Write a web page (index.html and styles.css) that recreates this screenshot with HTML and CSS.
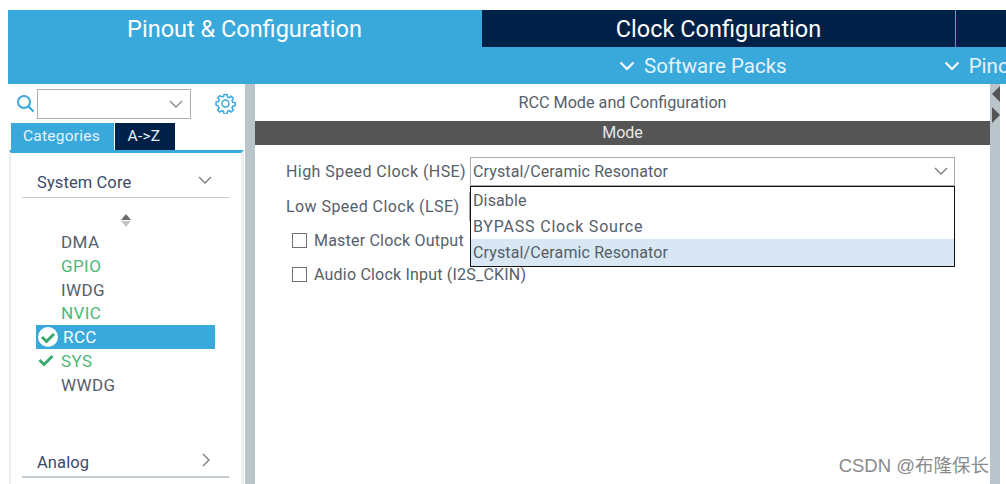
FILE: index.html

```html
<!DOCTYPE html>
<html lang="en">
<head>
  <meta charset="UTF-8">
  <title>RCC Mode and Configuration</title>
  <link rel="stylesheet" href="styles.css">
</head>
<body>
  <header class="top">
    <div class="tabs">
      <div class="tab tab-active">Pinout &amp; Configuration</div>
      <div class="tab">Clock Configuration</div>
      <div class="tab tab-rest"></div>
    </div>
    <div class="subbar">
      <div class="sub sub-packs">
        <svg class="sub-chevron" width="16" height="10" viewBox="0 0 16 10"><path d="M1.500 1.500L8 8l6.500-6.500" fill="none" stroke="#fff" stroke-width="2.200"/></svg>
        Software Packs
      </div>
      <div class="sub sub-pinout">
        <svg class="sub-chevron" width="16" height="10" viewBox="0 0 16 10"><path d="M1.500 1.500L8 8l6.500-6.500" fill="none" stroke="#fff" stroke-width="2.200"/></svg>
        Pinout
      </div>
    </div>
  </header>

  <div class="body-row">
    <aside class="side">
      <div class="search-row">
        <svg class="search-icon" width="19" height="19" viewBox="0 0 19 19"><circle cx="8" cy="8" r="6" fill="none" stroke="#39a9dc" stroke-width="2"/><path d="M12.500 12.500L17.500 17.500" stroke="#39a9dc" stroke-width="2.200"/></svg>
        <div class="search-box">
          <svg width="14" height="8" viewBox="0 0 14 8"><path d="M1 1l6 6 6-6" fill="none" stroke="#8a8a8a" stroke-width="1.400"/></svg>
        </div>
        <svg class="gear" width="21" height="21" viewBox="0 0 21 21"><path d="M9 1.500h3l.5 2.500 1.700.7 2.100-1.400 2.100 2.100-1.400 2.100.7 1.700 2.500.5v3l-2.500.5-.7 1.700 1.400 2.100-2.100 2.100-2.100-1.400-1.700.7-.5 2.500H9l-.5-2.500-1.700-.7-2.100 1.400-2.100-2.100 1.400-2.100-.7-1.700L1 12V9l2.500-.5.7-1.700-1.400-2.100 2.100-2.100 2.100 1.400 1.700-.7z" fill="none" stroke="#39a9dc" stroke-width="1.500"/><circle cx="10.500" cy="10.500" r="3.500" fill="none" stroke="#39a9dc" stroke-width="1.500"/></svg>
      </div>
      <div class="cat-tabs">
        <div class="cat-tab cat-on">Categories</div>
        <div class="cat-tab cat-off">A-&gt;Z</div>
      </div>
      <div class="cat-panel">
        <div class="group">
          <span>System Core</span>
          <svg class="chev-down" width="14" height="8" viewBox="0 0 14 8"><path d="M1 1l6 6 6-6" fill="none" stroke="#7b7b7b" stroke-width="1.400"/></svg>
        </div>
        <div class="sort"><span class="sort-up"></span><span class="sort-down"></span></div>
        <ul class="items">
          <li>DMA</li>
          <li class="ok">GPIO</li>
          <li>IWDG</li>
          <li class="ok">NVIC</li>
          <li class="picked">
            <svg class="mark" width="22" height="22" viewBox="0 0 22 22"><circle cx="11" cy="11" r="10" fill="#fff"/><path d="M5 11l4.500 4.500L17 8" fill="none" stroke="#3aa76d" stroke-width="3"/></svg>
            RCC
          </li>
          <li class="ok">
            <svg class="mark" width="16" height="13" viewBox="0 0 16 13"><path d="M1.500 6l4.500 4.500L14.500 2" fill="none" stroke="#3aa76d" stroke-width="3"/></svg>
            SYS
          </li>
          <li>WWDG</li>
        </ul>
        <div class="group group-last">
          <span>Analog</span>
          <svg class="chev-right" width="8" height="14" viewBox="0 0 8 14"><path d="M1 1l6 6-6 6" fill="none" stroke="#7b7b7b" stroke-width="1.400"/></svg>
        </div>
      </div>
    </aside>

    <div class="bar"></div>

    <main class="main">
      <div class="main-title">RCC Mode and Configuration</div>
      <div class="mode-head">Mode</div>
      <div class="form">
        <div class="row row-hse">
          <label class="label-wide">High Speed Clock (HSE)</label>
          <div class="select">
            <span>Crystal/Ceramic Resonator</span>
            <svg width="14" height="8" viewBox="0 0 14 8"><path d="M1 1l6 6 6-6" fill="none" stroke="#7b7b7b" stroke-width="1.300"/></svg>
          </div>
        </div>
        <div class="row row-lse">
          <label class="label-wide">Low Speed Clock (LSE)</label>
          <div class="select select-lse"></div>
        </div>
        <div class="row row-check"><span class="box"></span><label>Master Clock Output</label></div>
        <div class="row row-check"><span class="box"></span><label>Audio Clock Input (I2S_CKIN)</label></div>
        <ul class="menu">
          <li>Disable</li>
          <li class="menu-wide">BYPASS Clock Source</li>
          <li class="menu-on">Crystal/Ceramic Resonator</li>
        </ul>
      </div>
    </main>

    <div class="bar bar-right">
      <span class="arrow-left"></span>
      <span class="arrow-right"></span>
    </div>
  </div>

  <div class="watermark">CSDN @布隆保长</div>
</body>
</html>
```

FILE: styles.css

```css
html, body {
  margin: 0;
  height: 484px;
  overflow: hidden;
}
body {
  position: relative;
  background: #fff;
  padding: 10px 0 0 8px;
  box-sizing: border-box;
  font-family: Roboto, "Liberation Sans", sans-serif;
  color: #555e6b;
}
ul {
  list-style: none;
  margin: 0;
  padding: 0;
}
.top {
  background: #39a9dc;
  height: 74px;
}
.tabs {
  display: flex;
  height: 37px;
}
.tab {
  width: 473px;
  margin-right: 1px;
  background: #002147;
  color: #fff;
  font-size: 23.500px;
  line-height: 39px;
  text-align: center;
}
.tab-active {
  background: #39a9dc;
}
.tab-rest {
  flex: 1;
  margin-right: 0;
}
.subbar {
  display: flex;
  height: 37px;
  color: #e4f3fb;
  font-size: 20.500px;
  line-height: 35px;
  overflow: hidden;
}
.sub {
  display: flex;
  align-items: center;
  gap: 9px;
  height: 35px;
  padding-top: 2px;
  white-space: nowrap;
}
.sub-chevron {
  margin-top: -2px;
}
.sub-packs {
  margin-left: 611px;
}
.sub-pinout {
  margin-left: 157px;
}
.body-row {
  display: flex;
  height: 400px;
}
.side {
  width: 237px;
  flex: none;
}
.search-row {
  display: flex;
  align-items: center;
  height: 39px;
  padding-left: 8px;
}
.search-box {
  display: flex;
  align-items: center;
  justify-content: flex-end;
  width: 145px;
  height: 28px;
  margin-left: 2px;
  padding-right: 7px;
  border: 1px solid #a8adb2;
}
.gear {
  margin-left: 24px;
}
.cat-tabs {
  display: flex;
  gap: 1px;
  height: 27px;
  padding-left: 3px;
}
.cat-tab {
  font-size: 15.500px;
  line-height: 27px;
  letter-spacing: 0.25px;
  text-align: center;
  color: #e4f3fb;
}
.cat-on {
  width: 101px;
  padding-right: 2px;
  background: #39a9dc;
}
.cat-off {
  width: 58px;
  padding-right: 2px;
  background: #002147;
}
.cat-panel {
  height: 334px;
  margin: 0 1px;
  padding: 0 12px 0 11px;
  box-sizing: border-box;
  border-top: 3px solid #39a9dc;
  border-left: 2px solid #eceff1;
  border-right: 3px solid #eceff1;
}
.group {
  display: flex;
  justify-content: space-between;
  align-items: flex-end;
  height: 45px;
  padding: 0 17px 5px 15px;
  box-sizing: border-box;
  border-bottom: 1px solid #c3ccd3;
  font-size: 16.500px;
  line-height: 19px;
  letter-spacing: 0.1px;
  color: #3b4a6b;
}
.chev-down {
  margin-bottom: 8px;
}
.group-last {
  height: 34px;
  margin-top: 47px;
  padding-bottom: 4px;
  border-bottom-width: 2px;
}
.chev-right {
  margin: 0 2px 5px 0;
}
.sort {
  display: flex;
  flex-direction: column;
  align-items: center;
  gap: 1px;
  height: 13px;
  margin: 16px 0 0 1px;
}
.sort-up {
  border: 5px solid transparent;
  border-top: 0;
  border-bottom: 6px solid #6c6c6c;
}
.sort-down {
  border: 5px solid transparent;
  border-bottom: 0;
  border-top: 6px solid #c6c6c6;
}
.items {
  width: 179px;
  margin: 3px 0 0 14px;
}
.items li {
  position: relative;
  height: 23.800px;
  padding-left: 25px;
  font-size: 17px;
  line-height: 24px;
  letter-spacing: 0.4px;
}
.items .ok {
  color: #4cb878;
}
.items .picked {
  padding-left: 27px;
  background: #39a9dc;
  color: #fff;
}
.mark {
  position: absolute;
  left: 1px;
  top: 1px;
}
.ok .mark {
  left: 2px;
  top: 5px;
}
.bar {
  width: 10px;
  flex: none;
  background: #b9c4cb;
}
.main {
  width: 735px;
  flex: none;
}
.main-title {
  height: 37px;
  font-size: 16.200px;
  line-height: 38px;
  text-align: center;
}
.mode-head {
  height: 24px;
  background: #545554;
  color: #e8e8e8;
  font-size: 16px;
  line-height: 24px;
  text-align: center;
}
.form {
  position: relative;
  padding: 12px 0 0 31px;
  font-size: 16px;
  letter-spacing: 0.2px;
}
.row {
  display: flex;
  align-items: center;
}
.label-wide {
  width: 184px;
  flex: none;
  letter-spacing: 0.44px;
}
.row-hse {
  height: 28px;
}
.row-lse {
  height: 38px;
  padding-top: 4px;
  box-sizing: border-box;
}
.row-check {
  height: 34px;
  padding-left: 6px;
  gap: 7px;
}
.select {
  display: flex;
  justify-content: space-between;
  align-items: center;
  width: 485px;
  height: 29px;
  padding: 0 6px 0 2px;
  border: 1px solid #a8adb2;
  box-sizing: border-box;
  letter-spacing: 0.12px;
}
.select-lse {
  margin-left: -1px;
}
.box {
  width: 13px;
  height: 13px;
  border: 1px solid #707070;
}
.menu {
  position: absolute;
  left: 215px;
  top: 41px;
  width: 485px;
  height: 81px;
  box-sizing: border-box;
  border: 1.500px solid #111;
  background: #fff;
  letter-spacing: 0.12px;
}
.menu li {
  height: 26px;
  padding-left: 2px;
  line-height: 27px;
}
.menu .menu-wide {
  letter-spacing: 0.8px;
}
.menu .menu-on {
  height: 26.500px;
  background: #d8e7f3;
}
.bar-right {
  position: relative;
}
.arrow-left, .arrow-right {
  position: absolute;
  left: 2px;
  width: 0;
  height: 0;
  border-top: 8px solid transparent;
  border-bottom: 8px solid transparent;
}
.arrow-left {
  top: 2px;
  border-right: 8px solid #555;
}
.arrow-right {
  top: 23px;
  border-left: 8px solid #555;
}
.watermark {
  position: absolute;
  right: 17px;
  top: 451px;
  font-family: "Liberation Sans", "Noto Sans CJK SC", sans-serif;
  font-size: 18.500px;
  color: #8a8a8a;
}
```
